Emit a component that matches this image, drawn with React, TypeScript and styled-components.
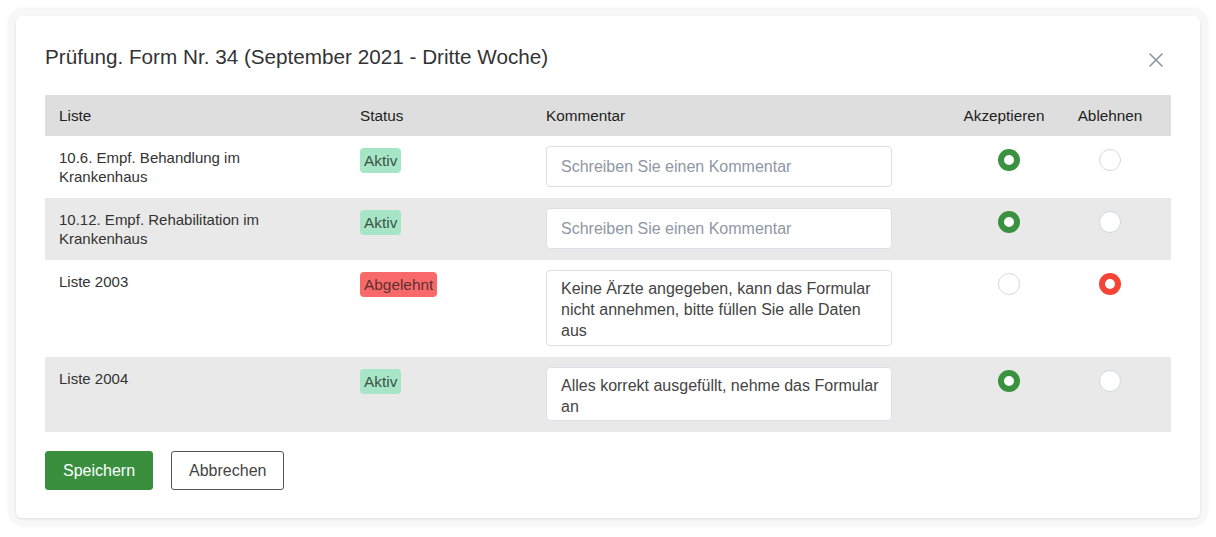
import React from "react";
import styled, { createGlobalStyle } from "styled-components";

const Global = createGlobalStyle`
  html, body { margin: 0; padding: 0; background: #ffffff; }
  body { font-family: "Liberation Sans", Arial, Helvetica, sans-serif; color: #333; }
  * { box-sizing: border-box; }
`;

const Frame = styled.div`
  margin: 8px;
  width: 1200px;
  padding: 8px;
  border-radius: 16px;
  background: #f7f7f7;
  box-shadow: 0 0 3px rgba(0, 0, 0, 0.06);
`;

const Card = styled.div`
  background: #fff;
  border-radius: 6px;
  box-shadow: 0 1px 3px rgba(0, 0, 0, 0.1);
  padding: 29px 29px 28px 29px;
  height: 502px;
`;

const TitleRow = styled.div`
  display: flex;
  align-items: center;
  justify-content: space-between;
  height: 24px;
  margin-bottom: 26px;
`;

const Title = styled.h2`
  margin: 0;
  font-size: 20.7px;
  font-weight: 400;
  line-height: 24px;
  color: #333;
`;

const CloseButton = styled.button`
  border: none;
  background: transparent;
  padding: 0;
  margin: 6px 8px 0 0;
  width: 14px;
  height: 14px;
  display: flex;
  cursor: pointer;
`;

const cols = "301px 186px 418px 112px 108px";

const Row = styled.div<{ $bg: string }>`
  display: grid;
  grid-template-columns: ${cols};
  background: ${(p) => p.$bg};
  align-items: start;
`;

const HeadRow = styled(Row)`
  height: 41px;
  align-items: center;
`;

const HeadCell = styled.div<{ $center?: boolean; $pr?: number }>`
  padding: 0 ${(p) => (p.$center ? `${p.$pr ?? 0}px` : "14px")} 0 ${(p) => (p.$center ? "0" : "14px")};
  font-size: 15.3px;
  color: #222;
  text-align: ${(p) => (p.$center ? "center" : "left")};
  white-space: nowrap;
`;

const TextCell = styled.div`
  padding: 12px 14px 0 14px;
  font-size: 15px;
  line-height: 19px;
  color: #333;
`;

const ListName = styled.div`
  max-width: 240px;
`;

const Badge = styled.span<{ $variant: "ok" | "bad" }>`
  display: inline-block;
  padding: 3px 4px;
  border-radius: 4px;
  font-size: 15.4px;
  line-height: 19px;
  background: ${(p) => (p.$variant === "ok" ? "#a6e6c6" : "#f86a6a")};
  color: ${(p) => (p.$variant === "ok" ? "#3e5348" : "#5e2f2f")};
`;

const FieldCell = styled.div`
  padding: 10px 14px 11px 14px;
`;

const Field = styled.textarea<{ $h: number }>`
  display: block;
  width: 346px;
  height: ${(p) => p.$h}px;
  border: 1px solid #dcdfe4;
  border-radius: 4px;
  background: #fff;
  padding: 7px 8px 7px 14px;
  font-family: "Liberation Sans", Arial, Helvetica, sans-serif;
  font-size: 16px;
  line-height: 21px;
  color: #444;
  resize: none;
  overflow: hidden;
  outline: none;
  &::placeholder { color: #8e97a4; }
`;

const SingleField = styled.input`
  display: block;
  width: 346px;
  height: 41px;
  border: 1px solid #dcdfe4;
  border-radius: 4px;
  background: #fff;
  padding: 0 14px;
  font-family: "Liberation Sans", Arial, Helvetica, sans-serif;
  font-size: 16px;
  color: #444;
  outline: none;
  &::placeholder { color: #8e97a4; }
`;

const RadioCell = styled.div<{ $pr?: number; $pl?: number }>`
  padding: 13px ${(p) => p.$pr ?? 0}px 0 ${(p) => p.$pl ?? 0}px;
  display: flex;
  justify-content: center;
`;

const Radio = styled.span<{ $state: "off" | "ok" | "bad" }>`
  width: 22px;
  height: 22px;
  border-radius: 50%;
  background: #fff;
  border: ${(p) =>
    p.$state === "off" ? "1px solid #d3d8df" : `6px solid ${p.$state === "ok" ? "#3a913f" : "#f44436"}`};
`;

const Footer = styled.div`
  display: flex;
  gap: 18px;
  margin-top: 19px;
`;

const Button = styled.button<{ $primary?: boolean }>`
  height: 39px;
  padding: 0 17px;
  border-radius: 3px;
  font-family: "Liberation Sans", Arial, Helvetica, sans-serif;
  font-size: 16px;
  cursor: pointer;
  background: ${(p) => (p.$primary ? "#3a8f3f" : "#fff")};
  color: ${(p) => (p.$primary ? "#fff" : "#444")};
  border: 1px solid ${(p) => (p.$primary ? "#3a8f3f" : "#555")};
`;

type Item = {
  name: string;
  status: "Aktiv" | "Abgelehnt";
  comment: string;
  h?: number;
  choice: "accept" | "reject";
};

const items: Item[] = [
  { name: "10.6. Empf. Behandlung im Krankenhaus", status: "Aktiv", comment: "", choice: "accept" },
  { name: "10.12. Empf. Rehabilitation im Krankenhaus", status: "Aktiv", comment: "", choice: "accept" },
  {
    name: "Liste 2003",
    status: "Abgelehnt",
    comment: "Keine Ärzte angegeben, kann das Formular nicht annehmen, bitte füllen Sie alle Daten aus",
    h: 76,
    choice: "reject",
  },
  {
    name: "Liste 2004",
    status: "Aktiv",
    comment: "Alles korrekt ausgefüllt, nehme das Formular an",
    h: 54,
    choice: "accept",
  },
];

export default function App() {
  return (
    <>
      <Global />
      <Frame>
        <Card>
          <TitleRow>
            <Title>Prüfung. Form Nr. 34 (September 2021 - Dritte Woche)</Title>
            <CloseButton aria-label="Schließen">
              <svg width="14" height="14" viewBox="0 0 14 14">
                <path d="M1 1 L13 13 M13 1 L1 13" stroke="#8c96a3" strokeWidth="1.6" strokeLinecap="round" />
              </svg>
            </CloseButton>
          </TitleRow>
          <HeadRow $bg="#dedede">
            <HeadCell>Liste</HeadCell>
            <HeadCell>Status</HeadCell>
            <HeadCell>Kommentar</HeadCell>
            <HeadCell $center $pr={4}>Akzeptieren</HeadCell>
            <HeadCell $center $pr={12}>Ablehnen</HeadCell>
          </HeadRow>
          {items.map((it, i) => (
            <Row key={i} $bg={i % 2 === 1 ? "#e9e9e9" : "#ffffff"}>
              <TextCell>
                <ListName>{it.name}</ListName>
              </TextCell>
              <TextCell>
                <Badge $variant={it.status === "Aktiv" ? "ok" : "bad"}>{it.status}</Badge>
              </TextCell>
              <FieldCell>
                {it.comment ? (
                  <Field $h={it.h ?? 55} defaultValue={it.comment} />
                ) : (
                  <SingleField placeholder="Schreiben Sie einen Kommentar" />
                )}
              </FieldCell>
              <RadioCell $pl={6}>
                <Radio $state={it.choice === "accept" ? "ok" : "off"} />
              </RadioCell>
              <RadioCell $pr={12}>
                <Radio $state={it.choice === "reject" ? "bad" : "off"} />
              </RadioCell>
            </Row>
          ))}
          <Footer>
            <Button $primary>Speichern</Button>
            <Button>Abbrechen</Button>
          </Footer>
        </Card>
      </Frame>
    </>
  );
}
